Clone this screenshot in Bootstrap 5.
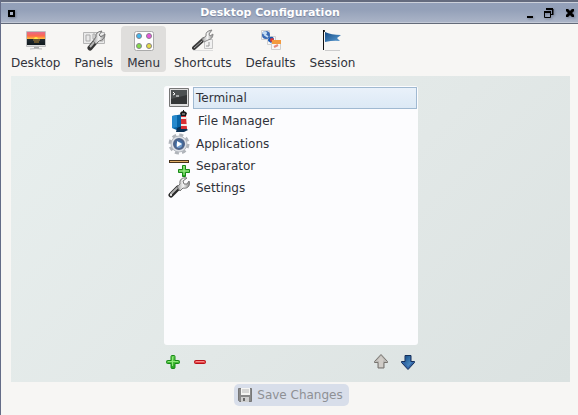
<!DOCTYPE html>
<html lang="en">
<head>
<meta charset="utf-8">
<meta name="viewport" content="width=device-width, initial-scale=1">
<title>Desktop Configuration</title>
<link href="https://cdn.jsdelivr.net/npm/bootstrap@5.3.0/dist/css/bootstrap.min.css" rel="stylesheet">
<style>
body{font:12px/16px "DejaVu Sans",sans-serif;color:#30323a;background:#f7f6f4}
svg{display:block;flex:none}
.btn{--bs-btn-font-size:12px;--bs-btn-line-height:16px;--bs-btn-color:#30323a;--bs-btn-border-width:0px;--bs-btn-padding-x:0px;--bs-btn-padding-y:0px}
.window{border-left:1px solid #656d88}
.titlebar{border-top:2px solid #646b7e;border-bottom:1px solid #646b7a;height:24px;background:linear-gradient(#93a0b9,#93a0b8 35%,#acb5c8);box-shadow:inset 0 1px #cbd0da,inset 0 -1px #c3c9d6;padding:0 2px 0 6px}
.titlebar h1{font-size:11px;line-height:16px;font-weight:700;color:#fff;text-shadow:0 1px 1px #77819b}
.titlebar svg{filter:drop-shadow(1px 1px 1px #727b90)}
.window-controls{gap:6px}
.tools{padding:2px 4px 4px;gap:2px}
.tool{--bs-btn-padding-x:6px;--bs-btn-border-radius:4px;--bs-btn-active-bg:#dfdedc;--bs-btn-active-color:#30323a;height:46px;padding-top:3px;gap:4px}
.pane{margin:0 8px 0 10px;background:linear-gradient(135deg,#e8efee,#e2e8e7 55%,#dbe2e1);padding:10px 0 9px 1px}
.editor{width:45.52%;margin:0 auto}
.menu-list{background:#fcfcfe;border-radius:3px;height:259px;padding:1px 1px 0 4px}
.entry{height:22px;gap:3px;padding:0;border:0;background:none;color:#30323a}
.entry-tall{height:23px}
.entry-label{flex:1;text-align:left;padding:2px;border:1px solid transparent;height:22px}
.entry[aria-selected=true] .entry-label{background:linear-gradient(#e9f1fa,#dce9f5);border-color:#a0b9d1}
.actions{padding:8px 0 0}
.save{--bs-btn-disabled-color:#8e9094;--bs-btn-disabled-bg:#d8deea;--bs-btn-disabled-opacity:1;--bs-btn-border-radius:5px;height:22px;padding:0 6px 0 3px;gap:4px;margin-top:2px}
.save-row{padding-left:4px}
</style>
<script src="https://cdn.jsdelivr.net/npm/bootstrap@5.3.0/dist/js/bootstrap.bundle.min.js"></script>
</head>
<body>
<svg width="0" height="0" class="position-absolute" aria-hidden="true"><defs>
<linearGradient id="sunset" x2="0" y2="1"><stop stop-color="#e46a8c"/><stop offset=".3" stop-color="#ff6a4b"/><stop offset=".53" stop-color="#ffc23c"/><stop offset=".56" stop-color="#222b32"/><stop offset="1" stop-color="#10191d"/></linearGradient>
<linearGradient id="steel"><stop stop-color="#999"/><stop offset=".5" stop-color="#f6f6f6"/><stop offset="1" stop-color="#888"/></linearGradient>
<linearGradient id="blue" x2="1" y2="1"><stop stop-color="#134b85"/><stop offset="1" stop-color="#5d9ed4"/></linearGradient>
<linearGradient id="green" x2="0" y2="1"><stop stop-color="#6ed758"/><stop offset="1" stop-color="#23a51c"/></linearGradient>
<g id="wrench"><path d="m3 18 7-7" stroke="#292929" stroke-width="5" stroke-linecap="round"/><path d="m3 17 6-6" stroke="#b0b0b0" stroke-width="2" stroke-linecap="round"/><path d="M9 10 12 7C11 3 14 0 19 1L15 4l1 3 3 0 2-3C23 10 18 12 15 11l-3 3Z" fill="url(#steel)" stroke="#777"/><circle cx="3" cy="18" r="1" fill="#fff"/></g>
</defs></svg>
<main class="window min-vh-100">
<header class="titlebar d-flex align-items-center justify-content-between">
<button class="btn" aria-label="Window menu"><svg width="9" height="10" viewBox="0 0 9 10"><path d="M2 3h5v5H2Z" fill="#a7b0c3" stroke="#000" stroke-width="2"/></svg></button>
<h1 class="m-0">Desktop Configuration</h1>
<div class="window-controls d-flex">
<button class="btn" aria-label="Minimize"><svg width="14" height="12" viewBox="0 0 14 12"><path d="M3 9h6v2H3Z"/></svg></button>
<button class="btn" aria-label="Restore"><svg width="14" height="12" viewBox="0 0 14 12"><path d="M2 2h7v6M.5 5.500h6v5h-6Z" fill="none" stroke="#000"/><path d="M2 1h7v2H2ZM0 4h7v2H0ZM8 2h1v6H7V7h1Z"/></svg></button>
<button class="btn" aria-label="Close"><svg width="12" height="12" viewBox="0 0 12 12"><path d="m3 3 6 6m0-6L3 9" stroke="#000" stroke-width="3"/><path d="M2 2h2v2H2Zm6 0h2v2H8ZM2 8h2v2H2Zm6 0h2v2H8Z"/></svg></button>
</div>
</header>
<nav class="tools d-flex" aria-label="Configuration sections">
<button class="btn tool d-flex flex-column align-items-center"><svg width="22" height="22" viewBox="0 0 22 22"><path d="M9 18h5v2H9Z" fill="#aaa"/><path d="M5 20q6-1 12 0" fill="none" stroke="#bbb"/><path d="M1.500 2.500h19v15h-19Z" fill="#ddd" stroke="#c0c0c0"/><path d="M2 3h18v13H2Z" fill="url(#sunset)"/><path d="M8 11h7M9 13h5" stroke="#b48430"/><path d="M9 10a2 2 0 0 1 4 0Z" fill="#ffe84c"/></svg><span>Desktop</span></button>
<button class="btn tool d-flex flex-column align-items-center"><svg width="24" height="22" viewBox="0 0 24 22"><path d="M1.500 3.500h21v11h-21Z" fill="#eaeaea" stroke="#b5b5b5"/><path d="M4 6h4v6H4Zm7-1h2v5h-2Zm7 2h3v5h-3Z" fill="none" stroke="#aaa"/><path d="m8 19 6-7" stroke="#363636" stroke-width="5" stroke-linecap="round"/><path d="m8 18 5-6" stroke="#b5b5b5" stroke-width="2"/><path d="m11 12 3-4q-1-5 6-6l-3 4 2 2 4-3q0 6-6 7l-3 3Z" fill="url(#steel)" stroke="#777"/></svg><span>Panels</span></button>
<button class="btn tool active d-flex flex-column align-items-center" aria-pressed="true"><svg width="22" height="22" viewBox="0 0 22 22"><rect x="1.500" y="2.500" width="19" height="19" rx="2" fill="#fdfdfd" stroke="#aaa"/><g stroke="#88818c"><circle cx="6" cy="7" r="2.500" fill="#42b8ef"/><circle cx="16" cy="7" r="2.500" fill="#e855dc"/><circle cx="6" cy="17" r="2.500" fill="#83dc48"/><circle cx="16" cy="17" r="2.500" fill="#e5dd45"/></g></svg><span>Menu</span></button>
<button class="btn tool d-flex flex-column align-items-center"><svg width="22" height="22" viewBox="0 0 22 22"><path d="M1 21.500h20" stroke="#ddd"/><path d="M12.500 10.500h8v9h-8Z" fill="#f1f1f1" stroke="#c5c5c5"/><path d="M17 13v4h-3" fill="none" stroke="#999"/><path d="m2 19 10-9" stroke="#3a3a3a" stroke-width="4" stroke-linecap="round"/><path d="m2 19 8-7" stroke="#aaa"/><path d="m10 10 4-3q-1-5 6-6l-3 4 1 2 3-2q0 5-5 6l-4 2Z" fill="url(#steel)" stroke="#888"/></svg><span>Shortcuts</span></button>
<button class="btn tool d-flex flex-column align-items-center"><svg width="22" height="22" viewBox="0 0 22 22"><g fill="#f8f8f8" stroke="#d0d0d0"><path d="M1.500 1.500h8v9h-8ZM7.500 7.500h8v8h-8Z"/><path d="M11.500 11.500h9v9h-9Z"/></g><circle cx="6" cy="6" r="4" fill="#3969b2"/><path d="M3 5q2-3 3-1L5 6l3 2" fill="none" stroke="#c3dcf3" stroke-width="2"/><path d="M8 12q0-5 5-4l1 2-3 4Z" fill="#1756b2"/><circle cx="12" cy="11" r="2" fill="#d83939"/><path d="M12 11h9v4h-9Z" fill="#f49a3e"/><path d="m14 18 4-2" stroke="#e68a7d" stroke-width="2"/></svg><span>Defaults</span></button>
<button class="btn tool d-flex flex-column align-items-center"><svg width="22" height="22" viewBox="0 0 22 22"><path d="M4 21.500h15" stroke="#ccc"/><path d="M4 3q6 3 16 3l-4 3 3 3q-6-1-15 1Z" fill="url(#blue)"/><path d="M2.500 1v20" stroke="#111"/><circle cx="3" cy="2" r="1"/></svg><span>Session</span></button>
</nav>
<section class="pane">
<div class="editor">
<div class="menu-list d-flex flex-column" role="listbox" aria-label="Menu entries">
<button class="entry entry-tall d-flex" role="option" aria-selected="true"><svg width="22" height="22" viewBox="0 0 22 22"><path d="M1.500 1.500h19v18h-19Z" fill="#ddd" stroke="#777"/><path d="M3 3h16v14H3Z" fill="#343637"/><path d="M3 3h16v5L3 12Z" fill="#4d5152"/><path d="m5 5 2 2-2 1m3 1h3" fill="none" stroke="#fff"/></svg><span class="entry-label">Terminal</span></button>
<button class="entry entry-tall d-flex" role="option" aria-selected="false"><svg width="24" height="22" viewBox="0 0 24 22"><path d="m4 6 11-2v15l-4 2-7-3Z" fill="#0764a7"/><path d="m4 6 5-1v12l-5 1Z" fill="#2689cd"/><path d="M9 18q5-4 11 2l-4 2H8Z" fill="#0b3155"/><path d="M13 6h5l1 13h-6Z" fill="#d92f34"/><path d="M13 7h5v2h-5Zm0 7h6v2h-6Z" fill="#f4e9e5"/><path d="M12 3q3-4 7 0l-1 3h-5ZM15 0h1v2h-1Z" fill="#171717"/><path d="M14 4h3" stroke="#bbb"/></svg><span class="entry-label">File Manager</span></button>
<button class="entry d-flex" role="option" aria-selected="false"><svg width="22" height="22" viewBox="0 0 22 22"><circle cx="11" cy="11" r="9" fill="none" stroke="#b0b4ba" stroke-width="3" stroke-dasharray="4 3.069"/><circle cx="11" cy="11" r="8" fill="#dcdfe4" stroke="#b5b9c0"/><circle cx="11" cy="11" r="5" fill="#426b9f" stroke="#4e6388" stroke-width="2"/><circle cx="11" cy="12" r="3" fill="#719bcb"/><path d="m9 8 5 3-5 3Z" fill="#fff"/></svg><span class="entry-label">Applications</span></button>
<button class="entry d-flex" role="option" aria-selected="false"><svg width="22" height="22" viewBox="0 0 22 22"><path d="M1 6.500h20" stroke="#49341c" stroke-width="3"/><path d="M2 6.500h18" stroke="#e2b069"/><path d="M14.500 10.500h3v4h4v3h-4v4h-3v-4h-4v-3h4Z" fill="url(#green)" stroke="#168817"/><path d="M16 11v9m-5-4h10" stroke="#a5ed91"/></svg><span class="entry-label">Separator</span></button>
<button class="entry d-flex" role="option" aria-selected="false"><svg width="22" height="22" viewBox="0 0 22 22"><use href="#wrench"/></svg><span class="entry-label">Settings</span></button>
</div>
<div class="actions d-flex justify-content-between">
<div class="d-flex gap-1">
<button class="btn" aria-label="Add"><svg width="19" height="20" viewBox="0 0 19 20"><path d="M8 2.500h2q1 0 1 1v4h3.500q1 0 1 1v1q0 1-1 1H11v4q0 1-1 1H8q-1 0-1-1v-4H3.500q-1 0-1-1v-1q0-1 1-1H7v-4q0-1 1-1Z" fill="url(#green)" stroke="#168817"/><path d="M8.500 4v9M4 8.500h10" stroke="#8ee77a"/></svg></button>
<button class="btn ms-1" aria-label="Remove"><svg width="19" height="20" viewBox="0 0 19 20"><rect x="3.500" y="7.500" width="11" height="3" rx="1" fill="#e54848" stroke="#b90f18"/><path d="M5 8.500h8" stroke="#f78b8b"/></svg></button>
</div>
<div class="d-flex gap-1">
<button class="btn me-1" aria-label="Move up"><svg width="19" height="20" viewBox="0 0 19 20"><path d="m9 1.500 6.500 7v1H12v5.500H6V9.500H2.500v-1Z" fill="#bab8b4" stroke="#77736e"/><path d="m9 3 3.500 4.500H11V14H7V8H5Z" fill="#d0ccc7"/></svg></button>
<button class="btn" aria-label="Move down"><svg width="19" height="20" viewBox="0 0 19 20"><path d="m6 2.500h6v6h3.500v1L9 16.500l-6.500-7v-1H6Z" fill="#3466a8" stroke="#142f59"/><path d="M7 3h4v6h2l-4 5-4-5h2Z" fill="url(#blue)"/></svg></button>
</div>
</div>
</div>
</section>
<footer class="save-row d-flex justify-content-center"><button class="btn save d-flex align-items-center" disabled><svg width="16" height="16" viewBox="0 0 16 16"><path d="M1.500 1.500h13v13h-12l-1-1Z" fill="#898989" stroke="#777"/><path d="M4 1h9v7H4Z" fill="#f5f5f3"/><path d="M5 3h7M5 5h7" stroke="#b7b7b7"/><path d="M4 10h8v5H4Z" fill="#cecece"/><path d="M6 11h2v3H6Z" fill="#696969"/></svg>Save Changes</button></footer>
</main>
</body>
</html>
